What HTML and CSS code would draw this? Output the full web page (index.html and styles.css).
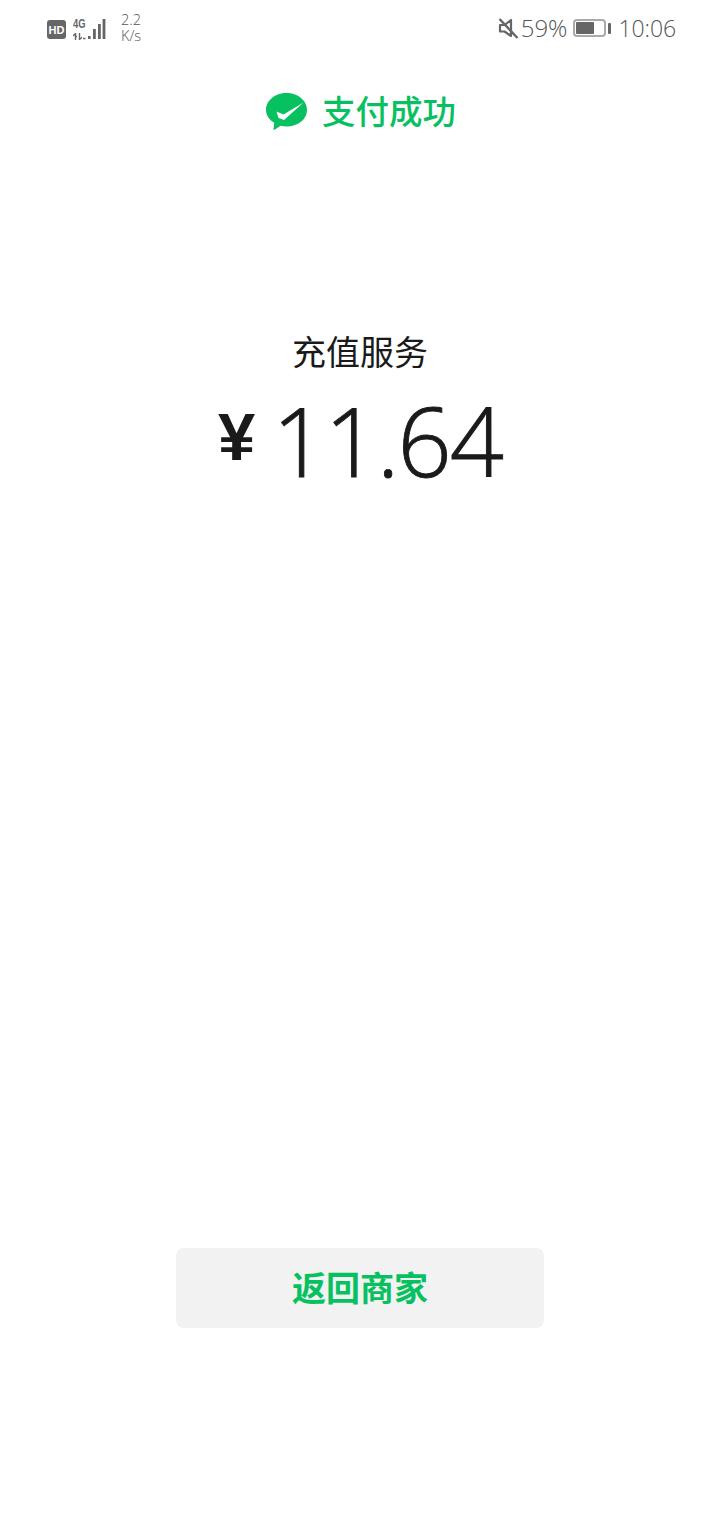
FILE: index.html
```html
<!DOCTYPE html>
<html lang="zh-CN">
<head>
<meta charset="utf-8">
<title>支付成功</title>
<link rel="stylesheet" href="styles.css">
</head>
<body>
<div class="page">
  <div class="status">
    <div class="status-left">
      <svg class="hd" width="19" height="19" viewBox="0 0 19 19"><rect width="19" height="19" rx="3" fill="#666"/><text x="9.5" y="14" text-anchor="middle" class="hd-text">HD</text></svg>
      <div class="net">
        <span class="net-label">4G</span>
        <svg width="13" height="7" viewBox="0 0 13 7" class="arrows"><path d="M2.5 7V0.5L0 3M2.5 3.5H4M6.5 0V6.5L9 4.2M10 5.5H12.5" stroke="#666" stroke-width="1.4" fill="none"/></svg>
      </div>
      <svg class="bars" width="18" height="21" viewBox="0 0 18 21"><g fill="#666"><rect x="0" y="17" width="2.6" height="3"/><rect x="5" y="10" width="2.8" height="10"/><rect x="10" y="5" width="2.8" height="15"/><rect x="14.6" y="0" width="2.8" height="20"/></g></svg>
      <div class="speed"><span>2.2</span><span>K/s</span></div>
    </div>
    <div class="status-right">
      <svg class="mute" width="21" height="21" viewBox="0 0 21 21"><path d="M2 7H6.5L13 2V18L6.5 13.5H2Z" fill="none" stroke="#666" stroke-width="2.2" stroke-linejoin="round"/><path d="M1.5 1 19.5 20" stroke="#666" stroke-width="2.4"/></svg>
      <span class="pct">59%</span>
      <div class="battery"><div class="battery-body"><div class="battery-fill"></div></div><div class="battery-tip"></div></div>
      <span class="clock">10:06</span>
    </div>
  </div>

  <div class="result">
    <svg class="logo" width="41" height="37" viewBox="0 0 41 37"><path d="M20.5 0C31.8 0 41 7.5 41 17S31.8 33.6 20.5 33.6C18.4 33.6 16.4 33.3 14.6 32.8L8.6 36.8C8 37.2 7.4 36.8 7.5 36.1L8.2 29.8C3.2 26.8 0 22.2 0 17 0 7.5 9.2 0 20.5 0Z" fill="#07c160"/><path d="M10.5 18.5 17.5 21.5 37.5 9.5 18 27 12.5 25Z" fill="#fff"/></svg>
    <h1 class="result-title">支付成功</h1>
  </div>

  <div class="order">
    <div class="merchant">充值服务</div>
    <div class="amount"><span class="currency">¥</span><span class="value">11.64</span></div>
  </div>

  <div class="actions">
    <button class="back">返回商家</button>
  </div>
</div>
</body>
</html>
```

FILE: styles.css
```css
* { box-sizing: border-box; }
html, body { margin: 0; padding: 0; background: #fff; }
body { font-family: "Noto Sans CJK SC", "Noto Sans", sans-serif; color: #1a1a1a; }
.page { width: 720px; height: 1520px; display: flex; flex-direction: column; overflow: hidden; }

.status { height: 56px; padding: 0 44px 0 47px; display: flex; justify-content: space-between; align-items: center; color: #666; }
.status-left, .status-right { display: flex; align-items: center; }
.hd { margin-top: 2px; }
.hd-text { font: 700 11px "Liberation Sans", sans-serif; fill: #fff; }
.net { width: 14px; margin-left: 7px; display: flex; flex-direction: column; gap: 3px; margin-top: 2px; }
.net-label { font: 700 12px/11px "Liberation Sans", sans-serif; color: #666; transform: scaleX(.78); transform-origin: left; }
.arrows { display: block; }
.bars { margin-left: 1px; margin-top: 2px; }
.speed { margin-left: 15px; display: flex; flex-direction: column; font: 300 14.5px/16px "Open Sans", sans-serif; color: #555; }
.mute { margin-right: 2px; margin-top: 1px; }
.pct, .clock { font: 300 24px/30px "Open Sans", sans-serif; color: #555; }
.clock { font-size: 23px; letter-spacing: -.1px; }
.battery { display: flex; align-items: center; margin-left: 5px; margin-right: 8px; }
.battery-body { width: 33px; height: 18px; border: 2px solid #aaa; border-radius: 4px; padding: 1px; }
.battery-fill { width: 68%; height: 100%; background: #666; border-radius: 1px; }
.battery-tip { width: 3px; height: 11px; margin-left: 2px; background: #666; border-radius: 1px; }

.result { margin-top: 33px; padding-left: 2px; display: flex; justify-content: center; align-items: center; gap: 15px; }
.result-title { margin: 0; font-size: 33.5px; line-height: 42px; font-weight: 500; color: #07c160; }
.logo { margin-top: 3px; }

.order { margin-top: 197px; display: flex; flex-direction: column; align-items: center; }
.merchant { font-size: 34px; line-height: 46px; font-weight: 400; color: #1a1a1a; }
.amount { margin-top: 16px; display: flex; align-items: baseline; justify-content: center; }
.currency { font: 700 67px/100px "Liberation Sans", sans-serif; margin-right: 17px; position: relative; top: -17px; }
.value { font: 300 95px/100px "Open Sans", sans-serif; letter-spacing: -2px; -webkit-text-stroke: .9px #1a1a1a; }

.actions { margin-top: auto; padding-bottom: 192px; display: flex; justify-content: center; }
.back { width: 368px; height: 80px; border: 0; border-radius: 8px; background: #f2f2f2; color: #07c160; padding: 0 0 2px; font: 700 34px/44px "Noto Sans CJK SC", sans-serif; }
```
